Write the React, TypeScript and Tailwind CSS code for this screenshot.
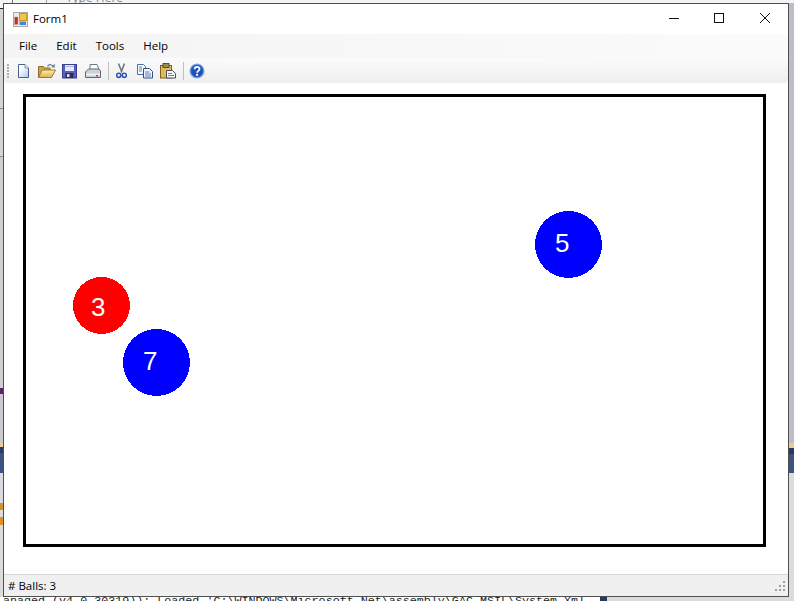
const FONT = "font-['Segoe_UI','Open_Sans','Noto_Sans','Liberation_Sans',sans-serif]";

const NewIcon = () => (
  <svg width="13" height="16" viewBox="0 0 13 16">
    <defs>
      <linearGradient id="page" x1="0" y1="0" x2="1" y2="1">
        <stop offset="0.3" stopColor="#ffffff" />
        <stop offset="1" stopColor="#a9c3e4" />
      </linearGradient>
    </defs>
    <path d="M1.500 1.500h6.500l3.500 3.500v9.500h-10z" fill="url(#page)" stroke="#46618c" />
    <path d="M8 1.500v3.500h3.500" fill="#eef3fa" stroke="#7f96b8" />
  </svg>
);

const OpenIcon = () => (
  <svg width="18" height="16" viewBox="0 0 18 16">
    <defs>
      <linearGradient id="folder" x1="0" y1="0" x2="0" y2="1">
        <stop offset="0" stopColor="#fdeeb0" />
        <stop offset="1" stopColor="#e0b04a" />
      </linearGradient>
    </defs>
    <path d="M0.500 3.500h5l1 1.500h5.500v9.500h-11.500z" fill="#cfa64d" stroke="#8b6b2a" />
    <path d="M0.500 14.500l3.500-7.500h13.500l-4 7.500z" fill="url(#folder)" stroke="#9a7a34" />
    <path d="M9.500 3.500c1.500-2.500 3.500-2.500 5.500-0.500" fill="none" stroke="#6f7f96" strokeWidth="1.300" />
    <path d="M16.800 0.800v3.700h-3.700z" fill="#6f7f96" />
  </svg>
);

const SaveIcon = () => (
  <svg width="15" height="16" viewBox="0 0 15 16">
    <rect x="0.500" y="1.500" width="14" height="13.500" fill="#5a60c2" stroke="#39408f" />
    <rect x="3" y="2" width="9" height="6" fill="#e6e9f7" />
    <rect x="3" y="3" width="9" height="1" fill="#aeb5e0" />
    <rect x="3.500" y="10" width="8" height="5" fill="#2b2f55" />
    <rect x="5" y="11" width="2.500" height="3" fill="#dfe2ee" />
  </svg>
);

const PrintIcon = () => (
  <svg width="16" height="16" viewBox="0 0 16 16">
    <path d="M5 1.500h7l2 5h-9z" fill="#fafbfc" stroke="#70798a" />
    <path d="M0.500 9l3-3h10.500l1.500 2v6.500h-15z" fill="#cdd2da" stroke="#5f6878" />
    <path d="M1 11.500h14" stroke="#f6f7f9" strokeWidth="1.500" />
    <rect x="11" y="12" width="2" height="1.500" fill="#c23b3b" />
  </svg>
);

const CutIcon = () => (
  <svg width="11" height="16" viewBox="0 0 11 16">
    <path d="M2.500 0.500l3.500 9M8.500 0.500l-3.500 9" stroke="#6a7280" strokeWidth="1.500" fill="none" />
    <circle cx="2.700" cy="12.300" r="2.100" fill="none" stroke="#2f55b5" strokeWidth="1.600" />
    <circle cx="8.300" cy="12.300" r="2.100" fill="none" stroke="#2f55b5" strokeWidth="1.600" />
  </svg>
);

const CopyIcon = () => (
  <svg width="16" height="16" viewBox="0 0 16 16">
    <path d="M0.500 1.500h6l2 2v8h-8z" fill="#f7faff" stroke="#4d6f9f" />
    <path d="M6.500 5.500h6l3 3v6.500h-9z" fill="#f2f6fd" stroke="#2e4f86" />
    <path d="M8 9h4.500M8 11h6M8 13h6M2 4h3M2 6h3M2 8h3" stroke="#5d7fb3" />
  </svg>
);

const PasteIcon = () => (
  <svg width="16" height="16" viewBox="0 0 16 16">
    <rect x="0.500" y="2.500" width="11" height="12.500" fill="#e3bb55" stroke="#7c6122" />
    <rect x="3" y="0.500" width="6" height="4" fill="#9d8a5c" stroke="#5f4f28" />
    <path d="M6.500 7.500h6l3 3v4.500h-9z" fill="#f5f6f8" stroke="#474f60" />
    <path d="M8 10.500h4M8 12.500h6" stroke="#77839a" />
  </svg>
);

const HelpIcon = () => (
  <svg width="16" height="16" viewBox="0 0 16 16">
    <circle cx="8" cy="8" r="7" fill="#2b63cf" stroke="#86aae4" strokeWidth="1.200" />
    <circle cx="8" cy="8" r="5.600" fill="#1d50b8" />
    <path d="M5.600 6.300c0-3.200 5-3.200 5-0.300 0 1.900-2.500 1.900-2.500 3.800" fill="none" stroke="#fff" strokeWidth="1.800" />
    <rect x="7.100" y="10.800" width="2" height="2" fill="#fff" />
  </svg>
);

const FormIcon = () => (
  <svg width="15" height="15" viewBox="0 0 15 15">
    <rect x="0.500" y="0.500" width="14" height="14" fill="#ececec" stroke="#a8a8a8" />
    <rect x="6.500" y="1.500" width="7" height="7" fill="#f3c744" stroke="#c59a28" />
    <rect x="1.500" y="5" width="3.500" height="7.500" fill="#b9332a" stroke="#d9a09c" strokeWidth="0.500" />
    <rect x="6.500" y="9.500" width="6.500" height="3.500" fill="#4a86d8" />
  </svg>
);

const Slot = ({ children }: { children: React.ReactNode }) => (
  <div className="flex w-[23px] justify-center">{children}</div>
);

const Sep = () => <div className="ml-[4px] mr-[1px] h-[18px] w-px bg-[#bcc0c4]" />;

const Ball = ({ cls, color, label, textCls }: { cls: string; color: string; label: string; textCls: string }) => (
  <div className={`absolute ${cls}`}>
    <svg className="h-full w-full" viewBox="0 0 100 100" shapeRendering="crispEdges">
      <circle cx="50" cy="50" r="50" fill={color} />
    </svg>
    <span className={`absolute font-['Liberation_Sans',sans-serif] text-[26px] leading-none text-white ${textCls}`}>
      {label}
    </span>
  </div>
);

const leftStrip = [
  { h: "h-[5px]", c: "bg-[#f4f4f4]" },
  { h: "h-px", c: "bg-[#222222]" },
  { h: "h-[99px]", c: "bg-[#d4d4d4]" },
  { h: "h-px", c: "bg-[#8a8a8a]" },
  { h: "h-[47px]", c: "bg-[#d4d4d4]" },
  { h: "h-px", c: "bg-[#8a8a8a]" },
  { h: "h-[231px]", c: "bg-[#d0d0d4]" },
  { h: "h-[6px]", c: "bg-[#5d1f6b]" },
  { h: "h-[49px]", c: "bg-[#c9c9cf]" },
  { h: "h-[4px]", c: "bg-[#e8cf8a]" },
  { h: "h-[6px]", c: "bg-[#2a3a5e]" },
  { h: "h-[20px]", c: "bg-[#3c5480]" },
  { h: "h-[30px]", c: "bg-[#d8dbe2]" },
  { h: "h-[7px]", c: "bg-[#d9912e]" },
  { h: "h-[7px]", c: "bg-[#dcdcdc]" },
  { h: "h-[8px]", c: "bg-[#d9912e]" },
  { h: "h-[72px]", c: "bg-[#dcdcdc]" },
];

const rightStrip = [
  { h: "h-[440px]", c: "bg-[#bcbdc5]" },
  { h: "h-[5px]", c: "bg-[#e8cf8a]" },
  { h: "h-[6px]", c: "bg-[#2a3a5e]" },
  { h: "h-[19px]", c: "bg-[#3c5480]" },
  { h: "h-[124px]", c: "bg-[#dcdcdc]" },
];

export default function App() {
  return (
    <div className={`flex h-[601px] w-[794px] flex-col overflow-hidden bg-[#d9d9d9] ${FONT}`}>
      <div className="flex h-[3px] overflow-hidden bg-[#f4f4f4]">
        <div className="ml-[12px] w-px bg-[#777777]" />
        <div className="ml-[33px] w-px bg-[#aaaaaa]" />
        <div className="-mt-[8px] ml-[19px] text-[12px] leading-[11px] text-[#8a8a8a]">Type Here</div>
      </div>
      <div className="flex h-[594px]">
        <div className="flex w-[3px] flex-col">
          {leftStrip.map((s, i) => (
            <div key={i} className={`${s.h} ${s.c}`} />
          ))}
        </div>
        <div className="flex w-[786px] flex-col border border-[#4f4f4f] bg-white">
          <div className="flex h-[30px] items-center pl-[9px]">
            <FormIcon />
            <span className="ml-[5px] text-[11.5px] text-black">Form1</span>
            <div className="ml-auto flex items-center">
              <svg width="138" height="30" viewBox="0 0 138 30" fill="none" stroke="#111">
                <path d="M25 14.500h10" />
                <rect x="70.500" y="9.500" width="9" height="9" />
                <path d="M116 9l10 10M126 9l-10 10" />
              </svg>
              <div className="w-[6px]" />
            </div>
          </div>
          <div className="flex h-[24px] items-center gap-[19px] bg-gradient-to-r from-[#f4f4f4] to-[#fbfbfb] pl-[15px] text-[11.5px] text-black">
            <span>File</span>
            <span>Edit</span>
            <span>Tools</span>
            <span>Help</span>
          </div>
          <div className="flex h-[25px] items-center rounded-bl-[4px] rounded-br-[4px] bg-gradient-to-b from-[#fbfbfb] to-[#eeeeee] pl-[3px]">
            <div className="mr-[3px] flex flex-col gap-[1px]">
              <div className="h-[2px] w-[2px] bg-[#b0b0b0]" />
              <div className="h-[2px] w-[2px] bg-[#b0b0b0]" />
              <div className="h-[2px] w-[2px] bg-[#b0b0b0]" />
              <div className="h-[2px] w-[2px] bg-[#b0b0b0]" />
              <div className="h-[2px] w-[2px] bg-[#b0b0b0]" />
            </div>
            <Slot><NewIcon /></Slot>
            <Slot><OpenIcon /></Slot>
            <Slot><SaveIcon /></Slot>
            <Slot><PrintIcon /></Slot>
            <Sep />
            <Slot><CutIcon /></Slot>
            <Slot><CopyIcon /></Slot>
            <Slot><PasteIcon /></Slot>
            <Sep />
            <Slot><HelpIcon /></Slot>
          </div>
          <div className="flex-1 px-[19px] pb-[27px] pt-[11px]">
            <div className="relative h-[453px] w-[743px] border-[3px] border-black">
              <Ball cls="left-[47px] top-[180px] h-[57px] w-[57px]" color="#ff0000" label="3" textCls="left-[18px] top-[17px]" />
              <Ball cls="left-[97px] top-[232px] h-[67px] w-[67px]" color="#0000ff" label="7" textCls="left-[20px] top-[19px]" />
              <Ball cls="left-[509px] top-[114px] h-[67px] w-[67px]" color="#0000ff" label="5" textCls="left-[20px] top-[19px]" />
            </div>
          </div>
          <div className="flex h-[22px] items-center justify-between border-t border-[#d7d7d7] bg-[#f0f0f0] pl-[4px] pr-[2px] text-[11.5px] text-black">
            <span># Balls: 3</span>
            <svg width="12" height="12" viewBox="0 0 12 12" fill="#a0a0a0">
              <rect x="9" y="1" width="2" height="2" />
              <rect x="5" y="5" width="2" height="2" />
              <rect x="9" y="5" width="2" height="2" />
              <rect x="1" y="9" width="2" height="2" />
              <rect x="5" y="9" width="2" height="2" />
              <rect x="9" y="9" width="2" height="2" />
            </svg>
          </div>
        </div>
        <div className="flex w-[5px] flex-col">
          {rightStrip.map((s, i) => (
            <div key={i} className={`${s.h} ${s.c}`} />
          ))}
        </div>
      </div>
      <div className="flex h-[4px] overflow-hidden">
        <div className="w-[600px] overflow-hidden whitespace-nowrap bg-white pl-[3px] font-['Liberation_Mono',monospace] text-[11.7px] leading-[8px] text-[#222]">
          anaged (v4.0.30319)): Loaded 'C:\WINDOWS\Microsoft.Net\assembly\GAC_MSIL\System.Xml
        </div>
        <div className="w-[7px] bg-[#2a3a5e]" />
        <div className="flex-1 bg-[#dcdcdc]" />
      </div>
    </div>
  );
}
